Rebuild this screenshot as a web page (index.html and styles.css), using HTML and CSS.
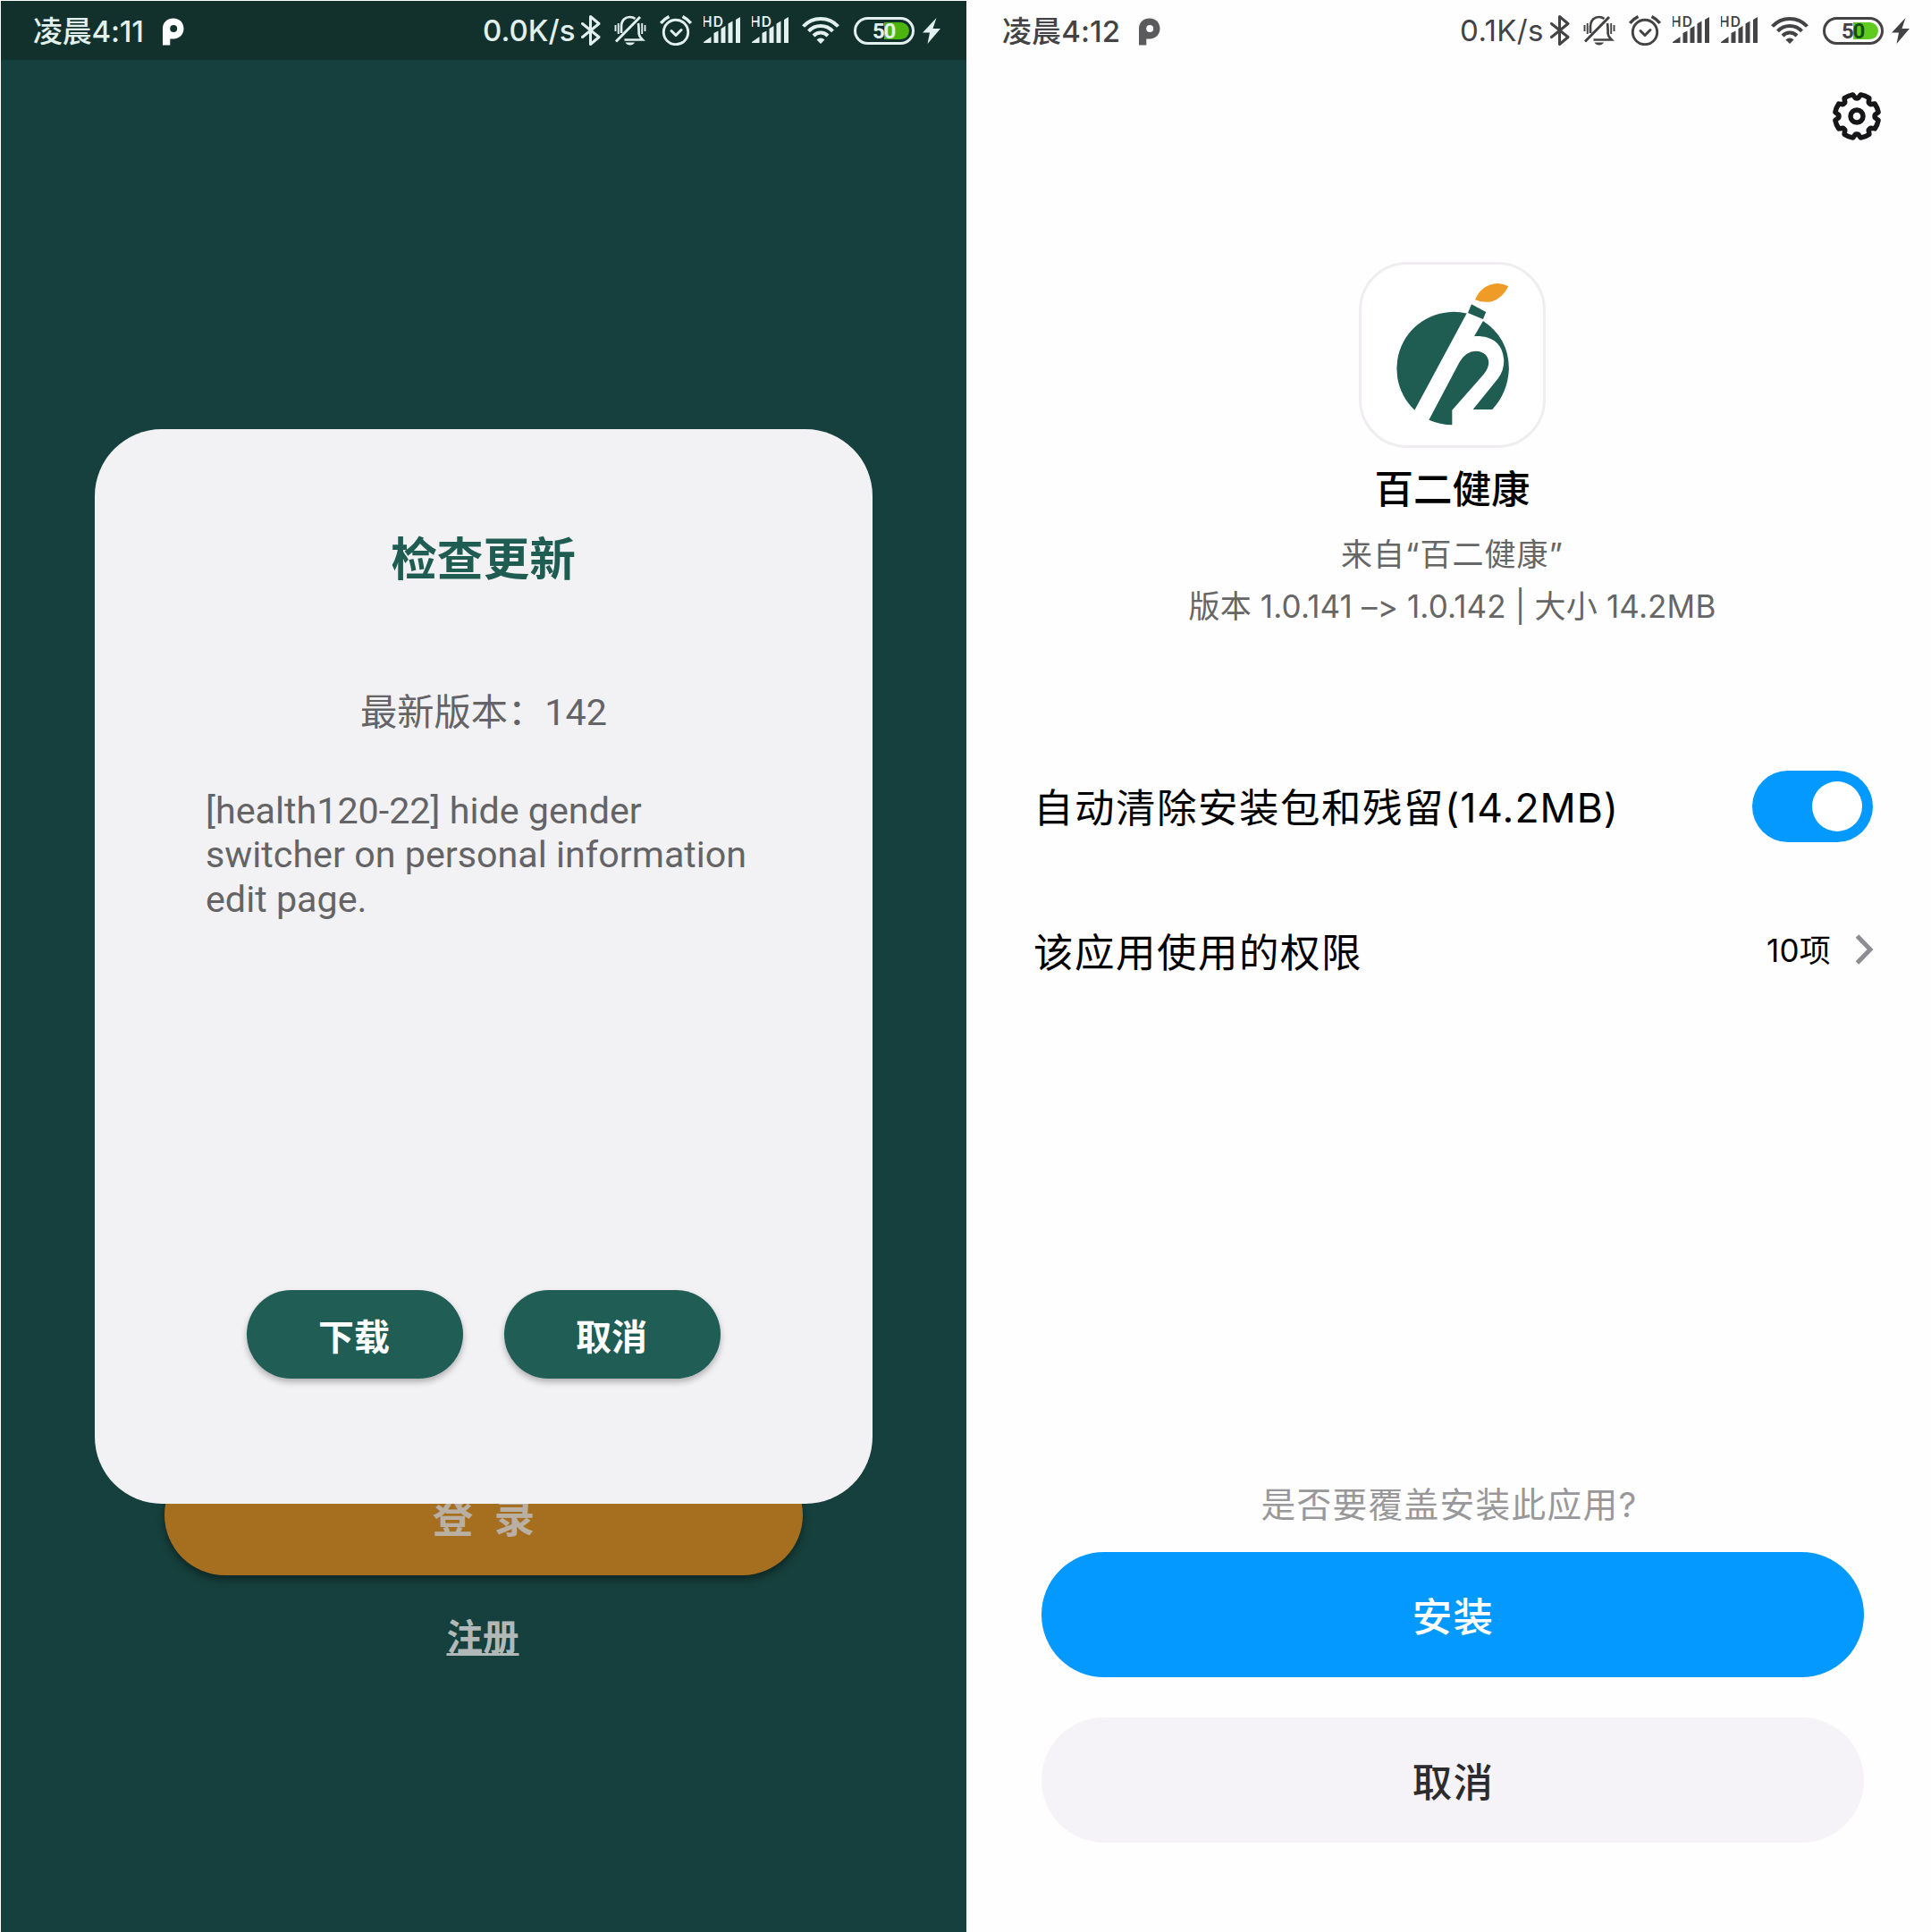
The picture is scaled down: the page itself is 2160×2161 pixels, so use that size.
FILE: index.html
```html
<!DOCTYPE html>
<html lang="zh-CN">
<head>
<meta charset="utf-8">
<title>检查更新</title>
<link rel="stylesheet" href="styles.css">
</head>
<body>
<svg class="sprite" aria-hidden="true">
  <symbol id="parking" viewBox="0 0 24 31"><path fill="currentColor" fill-rule="evenodd" d="M0 30.500V12C0 5 5 .5 12 .5s11.500 5 11.500 11.500S18.500 23.500 12 23.500H8.300v7zM12.200 8a4 4 0 1 0 0 8 4 4 0 0 0 0-8z"/></symbol>
  <symbol id="bt" viewBox="0 0 22 34"><path fill="none" stroke="currentColor" stroke-width="3" stroke-linejoin="round" stroke-linecap="round" d="M1.500 9.500 20 24.500 10.500 32.500V1.500L20 9.500 1.500 24.500"/></symbol>
  <symbol id="bell" viewBox="0 0 36 34"><g fill="none" stroke="currentColor" stroke-width="2.700"><path stroke-width="3" d="M2 29.500 29 2"/><path d="M8 20V13C8 5 13 2 17.500 2c3 0 4.500.7 6 2M27 9c.6 3 .5 7 .7 12 .2 3 2 4.500 4 6.500H11.500"/><path stroke-width="1.900" d="M1.500 11v7M4.700 9v12M31.200 9v12M34.500 11v7"/></g><path fill="currentColor" d="M12.500 30.500h10.500c-1 2-3 3-5.200 3s-4.300-1-5.300-3z"/></symbol>
  <symbol id="alarm" viewBox="0 0 36 34"><g fill="none" stroke="currentColor" stroke-width="2.900"><circle cx="18" cy="19" r="13.700"/><path stroke-width="3" stroke-linecap="round" stroke-linejoin="round" d="m13 17.500 5 5 6-6"/><path stroke-width="3.500" d="M1.200 9C3.500 6 6.500 3.500 10.500 1.500M34.800 9C32.500 6 29.500 3.500 25.500 1.500"/></g></symbol>
  <symbol id="signal" viewBox="0 0 41 31"><path fill="currentColor" d="M0 30v-1l8.500-6v7zM11.500 30V19l5-2.500V30zM19.500 30V14l5-3V30zM27.500 30V8.500l5-3V30zM36 30V4l5-3v29z"/><text x="-2" y="11.500" font-size="15.500" font-weight="600" textLength="24" fill="currentColor">HD</text></symbol>
  <symbol id="wifi" viewBox="0 0 42 31"><g fill="none" stroke="currentColor" stroke-width="4"><path d="M1.500 11.500C12 0 30 0 40.500 11.500"/><path d="M7.500 16.800C15 9 27 9 34.500 16.800"/><path d="M13 22C17.500 17.400 24.500 17.400 29 22"/></g><path fill="currentColor" d="m21 31-4.500-4.500c2.500-2.700 6.500-2.700 9 0z"/></symbol>
  <symbol id="bolt" viewBox="0 0 20 29"><path fill="currentColor" d="M15.500 0 0 16.500h8L5.500 29 20 12h-8.500z"/></symbol>
</svg>
<main class="screens">
  <section class="screen update">
    <header class="status">
      <span class="clock">凌晨4:11</span><svg class="i-parking"><use href="#parking"/></svg>
      <div class="tray">
        <span class="speed">0.0K/s</span>
        <svg class="i-bt"><use href="#bt"/></svg>
        <svg class="i-bell"><use href="#bell"/></svg>
        <svg class="i-alarm"><use href="#alarm"/></svg>
        <svg class="i-signal"><use href="#signal"/></svg>
        <svg class="i-signal"><use href="#signal"/></svg>
        <svg class="i-wifi"><use href="#wifi"/></svg>
        <span class="battery"><span class="level"></span><b>5<em>0</em></b></span>
        <svg class="i-bolt"><use href="#bolt"/></svg>
      </div>
    </header>
    <div class="login">
      <button class="login-btn">登 录</button>
      <a class="register">注册</a>
    </div>
    <div class="dialog">
      <h1>检查更新</h1>
      <p class="latest">最新版本：142</p>
      <p class="notes">[health120-22] hide gender switcher on personal information edit page.</p>
      <div class="actions">
        <button>下载</button>
        <button>取消</button>
      </div>
    </div>
  </section>
  <section class="screen install">
    <header class="status">
      <span class="clock">凌晨4:12</span><svg class="i-parking"><use href="#parking"/></svg>
      <div class="tray">
        <span class="speed">0.1K/s</span>
        <svg class="i-bt"><use href="#bt"/></svg>
        <svg class="i-bell"><use href="#bell"/></svg>
        <svg class="i-alarm"><use href="#alarm"/></svg>
        <svg class="i-signal"><use href="#signal"/></svg>
        <svg class="i-signal"><use href="#signal"/></svg>
        <svg class="i-wifi"><use href="#wifi"/></svg>
        <span class="battery"><span class="level"></span><b>5<em>0</em></b></span>
        <svg class="i-bolt"><use href="#bolt"/></svg>
      </div>
    </header>
    <div class="toolbar">
      <svg class="gear" viewBox="-28 -28 56 56">
        <defs><path id="tooth" d="M0-20.300H1.600L4.400-24.100A24.500 24.500 0 0 1 13.900-20.200L13.220-15.490 14.350-14.350"/></defs>
        <g fill="none" stroke="currentColor" stroke-width="5.500" stroke-linejoin="round" stroke-linecap="round">
          <use href="#tooth"/><use href="#tooth" transform="rotate(45)"/><use href="#tooth" transform="rotate(90)"/><use href="#tooth" transform="rotate(135)"/><use href="#tooth" transform="rotate(180)"/><use href="#tooth" transform="rotate(225)"/><use href="#tooth" transform="rotate(270)"/><use href="#tooth" transform="rotate(315)"/>
          <circle r="7"/>
        </g>
      </svg>
    </div>
    <div class="app">
      <div class="app-icon">
        <svg viewBox="63 70 627 622">
          <g fill="#1f5d53">
            <path d="M425 243A191 191 0 0 0 250 568Z"/>
            <path d="M298 601 400 408Q422 370 456 370C485 371 499 388 499 410Q497 430 480 450L376 568V618Q335 617 298 601Z"/>
            <path d="M480 268Q567 325 567 430 563 510 511 566H446L530 462Q551 435 550 400C546 340 505 317 450 320Z"/>
            <path d="M441 212 490 238 480 262 429 241Z"/>
          </g>
          <path fill="#ef9b27" d="M453 197Q475 145 530 142 550 143 565 152 547 190 510 203 480 208 453 197Z"/>
        </svg>
      </div>
      <h2>百二健康</h2>
      <p class="source">来自“百二健康”</p>
      <p class="version">版本 1.0.141 –&gt; 1.0.142 | 大小 14.2MB</p>
    </div>
    <div class="options">
      <div class="row clean"><span>自动清除安装包和残留<span class="size">(14.2MB)</span></span><span class="toggle"><i></i></span></div>
      <div class="row perms"><span>该应用使用的权限</span><span class="count">10项</span>
        <svg class="chevron" viewBox="0 0 20 34"><path fill="none" stroke="currentColor" stroke-width="5" d="M2.500 2 17 17 2.500 32"/></svg></div>
    </div>
    <footer>
      <p class="question">是否要覆盖安装此应用?</p>
      <button class="primary">安装</button>
      <button class="secondary">取消</button>
    </footer>
  </section>
</main>
</body>
</html>
```
FILE: styles.css
```css
* { box-sizing: border-box; }
body { margin: 0; background: #fefefe; }
h1, h2, p { margin: 0; }
button { border: 0; padding: 0; font: inherit; }
svg { display: block; flex: none; overflow: visible; }
.sprite { position: absolute; width: 0; height: 0; }
.screens { display: flex; width: 2160px; height: 2161px; overflow: hidden; padding: 1px 0 0 1px; }
.screen { position: relative; display: flex; flex-direction: column; height: 2160px; }
.update { width: 1080px; background: #16403d; font-family: Roboto, "Noto Sans CJK SC", sans-serif; }
.install { width: 1079px; background: #fefefe; font-family: Inter, "Noto Sans CJK SC", sans-serif; }

/* Status bar */
.status { display: flex; height: 66px; flex: none; padding: 0 29px 0 36px; font-family: Inter, "Noto Sans CJK SC", sans-serif; }
.update .status { background: #12312d; color: #e2f0ee; }
.install .status { padding: 0 24px 0 40px; color: #434345; }
.clock { font-size: 33px; font-weight: 500; line-height: 68px; white-space: nowrap; width: 126px; letter-spacing: -0.2px; }
.install .clock { width: 134px; letter-spacing: 0.100px; }
.i-parking { width: 24px; height: 31px; margin: 19px 0 0 19px; color: #fff; }
.install .i-parking { color: #5b5b5d; }
.tray { display: flex; margin-left: auto; }
.speed { font-size: 33px; line-height: 67px; font-weight: 500; width: 102px; white-space: nowrap; }
.install .speed { font-weight: 400; width: 93px; letter-spacing: 0.400px; }
.i-bt { width: 22px; height: 34px; margin: 16px 0 0 8px; }
.i-bell { width: 36px; height: 34px; margin: 16px 0 0 15px; }
.i-alarm { width: 36px; height: 34px; margin: 16px 0 0 15px; }
.i-signal { width: 41px; height: 31px; margin: 17px 0 0 13px; }
.i-wifi { width: 42px; height: 31px; margin: 17px 0 0 15px; }
.battery { position: relative; width: 68px; height: 31px; margin: 18px 0 0 16px; border: 3px solid currentColor; border-radius: 16px; padding: 3px; }
.level { display: block; width: 28px; height: 19px; margin-left: auto; background: #4bb50e; border-radius: 0 10px 10px 0; }
.install .level { background: #5fcb20; }
.battery b { position: absolute; inset: 0; font-family: Roboto, sans-serif; font-size: 24px; line-height: 26px; font-weight: 700; padding-left: 18px; letter-spacing: -1.200px; }
.battery em { font-style: normal; }
.install .battery em { color: #14500c; }
.i-bolt { width: 20px; height: 29px; margin: 19px 0 0 9px; }

/* Login page behind the dialog */
.login { display: flex; flex-direction: column; align-items: center; padding-top: 1560px; }
.login-btn { width: 714px; height: 135px; border-radius: 68px; background: #a66f20; color: #b9b0a3; font-size: 45.500px; font-weight: 700; line-height: 145px; word-spacing: 12px; box-shadow: 0 5px 8px rgba(0,0,0,.4); }
.register { margin: 40px 2px 0 0; font-size: 40.500px; line-height: 60px; font-weight: 700; color: #b0b9b7; text-decoration: underline; text-decoration-thickness: 3px; text-underline-offset: 3px; }

/* Update dialog */
.dialog { position: absolute; left: 105px; top: 478.500px; width: 870px; height: 1202.500px; border-radius: 75px; background: #f2f1f4; display: flex; flex-direction: column; padding: 0 126px 0 124px; color: #646466; }
.dialog h1 { margin-top: 107.500px; font-size: 51.700px; line-height: 80px; font-weight: 700; text-align: center; color: #1f5d53; padding-left: 1px; }
.latest { margin-top: 100px; font-size: 41.250px; line-height: 60px; text-align: center; padding-left: 2px; }
.notes { margin-top: 56px; font-size: 41.250px; line-height: 49.300px; }
.actions { display: flex; justify-content: center; gap: 46px; margin: auto -10px 140px -8px; }
.actions button { width: 242px; height: 99px; border-radius: 50px; background: #1f5d55; color: #fff; font-size: 40px; font-weight: 700; box-shadow: 0 4px 7px rgba(0,0,0,.28); padding-right: 2px; }

/* Installer */
.toolbar { display: flex; justify-content: flex-end; padding: 35px 55px 0 0; }
.gear { width: 56px; height: 56px; color: #161618; }
.app { display: flex; flex-direction: column; align-items: center; padding: 135px 0 0 8px; white-space: nowrap; font-feature-settings: "calt" 0; }
.app-icon { width: 209px; height: 208px; border-radius: 54px; border: 3px solid #f0edf0; background: #fff; }
.app-icon svg { width: 209px; height: 207px; margin: -3px; }
.app h2 { margin-top: 16px; font-size: 43.500px; line-height: 60px; font-weight: 500; color: #000; }
.source, .version { font-size: 35px; color: #666; }
.source { margin-top: 18px; line-height: 50px; letter-spacing: 1px; }
.version { margin-top: 8px; line-height: 50px; letter-spacing: 0.150px; }
.options { padding: 0 65px 0 75px; margin-top: 159px; font-size: 44.500px; color: #000; }
.row { display: flex; align-items: center; white-space: nowrap; letter-spacing: 1.500px; }
.clean { height: 80px; justify-content: space-between; line-height: 54px; }
.clean > span:first-child { padding-top: 4px; }
.size { letter-spacing: 1px; }
.toggle { display: flex; justify-content: flex-end; width: 135px; height: 80px; padding: 12px; border-radius: 40px; background: #0399ff; }
.toggle i { width: 56px; height: 56px; border-radius: 50%; background: #fff; }
.perms { height: 60px; margin-top: 90px; }
.count { margin-left: auto; font-size: 35px; letter-spacing: 0.200px; padding-bottom: 4px; }
.chevron { width: 20px; height: 34px; margin-left: 27px; color: #8d8d91; }
footer { display: flex; flex-direction: column; align-items: center; margin: auto 0 100px; padding-left: 8px; font-size: 44.500px; letter-spacing: 1.300px; }
.question { font-size: 38.700px; line-height: 56px; color: #98989a; margin-bottom: 25px; padding-right: 7px; }
footer button { width: 920px; height: 140px; border-radius: 70px; font-weight: 500; letter-spacing: 1.300px; padding: 0 0 2px 2px; }
.primary { background: #0399ff; color: #fff; }
.secondary { margin-top: 45px; background: #f5f3f7; color: #2c2c2e; }
```
